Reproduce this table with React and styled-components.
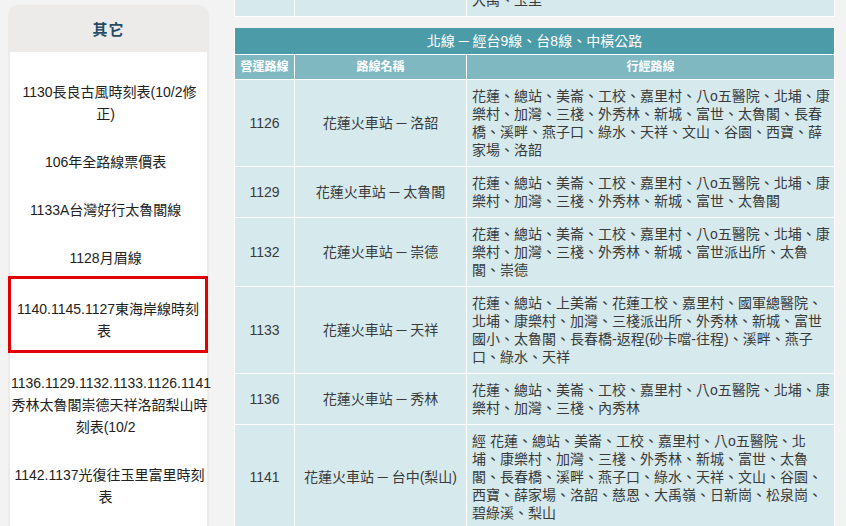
import React from 'react';
import styled, { createGlobalStyle } from 'styled-components';

const GlobalStyle = createGlobalStyle`
  html, body {
    margin: 0;
    padding: 0;
    height: 100%;
    overflow: hidden;
    background: #f3f3f3;
  }
  body {
    font-family: "Liberation Sans", "Noto Sans CJK TC", sans-serif;
    font-size: 14px;
  }
`;

const Page = styled.div`
  display: flex;
  align-items: flex-start;
  padding-left: 8px;
  gap: 25px;
  height: 526px;
`;

const Sidebar = styled.aside`
  width: 201px;
  margin-top: 5px;
  height: 521px;
  padding: 0 2px;
  box-sizing: border-box;
  background: #ecebea;
  border-radius: 10px 10px 0 0;
  display: flex;
  flex-direction: column;
`;

const SideTitle = styled.div`
  height: 47px;
  display: flex;
  align-items: center;
  justify-content: center;
  font-size: 15px;
  font-weight: 700;
  color: #264b66;
  letter-spacing: 1px;
`;

const SideList = styled.ul`
  list-style: none;
  margin: 0;
  padding: 10px 0 0;
  flex: 1;
  background: #fff;
`;

const SideItem = styled.li`
  padding: ${(p) => (p.$active ? '19px 0 8px' : '19px 0 7px 1px')};
  margin: ${(p) => (p.$active ? '0 -1px 0 -2px' : '0 -1px 0 0')};
  border: ${(p) => (p.$active ? '3px solid #e10000' : 'none')};
  line-height: 22px;
  text-align: center;
  color: #222;
`;

const Main = styled.main`
  width: 601px;
  display: flex;
  flex-direction: column;
  gap: 11px;
`;

// bottom of the previous table, scrolled mostly out of view
const Tail = styled.div`
  height: 17px;
  overflow: hidden;
  display: flex;
  flex-direction: column;
  justify-content: flex-end;
`;

const Table = styled.table`
  width: 601px;
  border-collapse: collapse;
  table-layout: fixed;
  color: #3a3a3a;
  line-height: 18px;
`;

const Title = styled.th`
  background: #4c9ba8;
  color: #fff;
  font-weight: normal;
  padding: 4px;
  border: 1px solid #fff;
  border-top: none;
`;

const Head = styled.th`
  background: #80b8c2;
  color: #fff;
  font-size: 12px;
  font-weight: 700;
  padding: 3px 0;
  border: 1px solid #fff;
`;

const Cell = styled.td`
  background: #d6eaee;
  border: 1px solid #fff;
  padding: ${(p) => (p.$left ? '7px 2px 7px 5px' : '7px 4px')};
  text-align: ${(p) => (p.$left ? 'left' : 'center')};
  vertical-align: middle;
`;

const sideItems = [
  { text: '1130長良古風時刻表(10/2修正)' },
  { text: '106年全路線票價表' },
  { text: '1133A台灣好行太魯閣線' },
  { text: '1128月眉線' },
  { text: '1140.1145.1127東海岸線時刻表', active: true },
  { text: '1136.1129.1132.1133.1126.1141秀林太魯閣崇德天祥洛韶梨山時刻表(10/2' },
  { text: '1142.1137光復往玉里富里時刻表' },
];

const routes = [
  {
    id: '1126',
    name: '花蓮火車站 ─ 洛韶',
    via: '花蓮、總站、美崙、工校、嘉里村、八o五醫院、北埔、康樂村、加灣、三棧、外秀林、新城、富世、太魯閣、長春橋、溪畔、燕子口、綠水、天祥、文山、谷園、西寶、薛家場、洛韶',
  },
  {
    id: '1129',
    name: '花蓮火車站 ─ 太魯閣',
    via: '花蓮、總站、美崙、工校、嘉里村、八o五醫院、北埔、康樂村、加灣、三棧、外秀林、新城、富世、太魯閣',
  },
  {
    id: '1132',
    name: '花蓮火車站 ─ 崇德',
    via: '花蓮、總站、美崙、工校、嘉里村、八o五醫院、北埔、康樂村、加灣、三棧、外秀林、新城、富世派出所、太魯閣、崇德',
  },
  {
    id: '1133',
    name: '花蓮火車站 ─ 天祥',
    via: '花蓮、總站、上美崙、花蓮工校、嘉里村、國軍總醫院、北埔、康樂村、加灣、三棧派出所、外秀林、新城、富世國小、太魯閣、長春橋-返程(砂卡噹-往程)、溪畔、燕子口、綠水、天祥',
  },
  {
    id: '1136',
    name: '花蓮火車站 ─ 秀林',
    via: '花蓮、總站、美崙、工校、嘉里村、八o五醫院、北埔、康樂村、加灣、三棧、內秀林',
  },
  {
    id: '1141',
    name: '花蓮火車站 ─ 台中(梨山)',
    via: '經 花蓮、總站、美崙、工校、嘉里村、八o五醫院、北埔、康樂村、加灣、三棧、外秀林、新城、富世、太魯閣、長春橋、溪畔、燕子口、綠水、天祥、文山、谷園、西寶、薛家場、洛韶、慈恩、大禹嶺、日新崗、松泉崗、碧綠溪、梨山',
  },
];

function Cols() {
  return (
    <colgroup>
      <col style={{ width: 60 }} />
      <col style={{ width: 172 }} />
      <col />
    </colgroup>
  );
}

export default function App() {
  return (
    <>
      <GlobalStyle />
      <Page>
        <Sidebar>
          <SideTitle>其它</SideTitle>
          <SideList>
            {sideItems.map((it) => (
              <SideItem key={it.text} $active={it.active}>
                {it.text + '\u00a0\u00a0'}
              </SideItem>
            ))}
          </SideList>
        </Sidebar>
        <Main>
          <Tail>
            <Table>
              <Cols />
              <tbody>
                <tr>
                  <Cell />
                  <Cell />
                  <Cell $left>大禹、玉里</Cell>
                </tr>
              </tbody>
            </Table>
          </Tail>
          <Table>
            <Cols />
            <thead>
              <tr>
                <Title colSpan={3}>北線 ─ 經台9線、台8線、中橫公路</Title>
              </tr>
              <tr>
                <Head>營運路線</Head>
                <Head>路線名稱</Head>
                <Head>行經路線</Head>
              </tr>
            </thead>
            <tbody>
              {routes.map((r) => (
                <tr key={r.id}>
                  <Cell>{r.id}</Cell>
                  <Cell>{r.name}</Cell>
                  <Cell $left>{r.via}</Cell>
                </tr>
              ))}
            </tbody>
          </Table>
        </Main>
      </Page>
    </>
  );
}
